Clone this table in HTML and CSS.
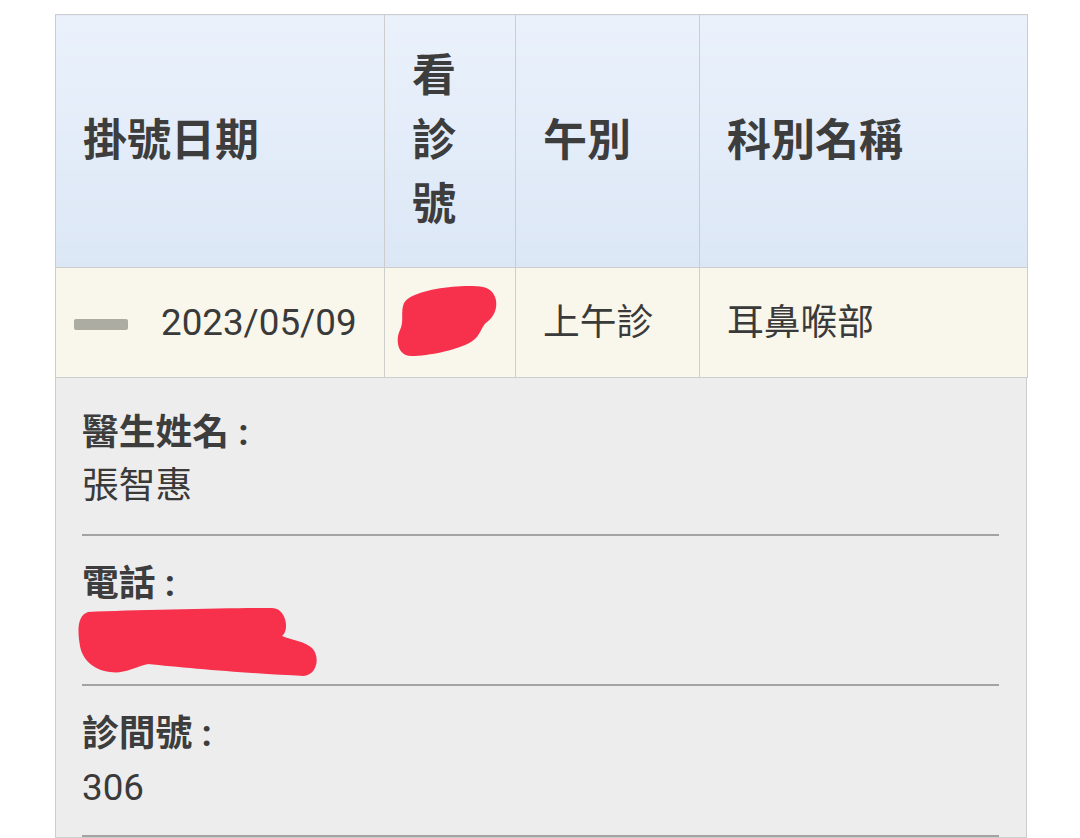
FILE: index.html
```html
<!DOCTYPE html>
<html>
  <head>
    <meta charset="utf-8">
    <title>掛號查詢</title>
    <link rel="stylesheet" href="styles.css">
  </head>
  <body>
    <div class="page">
      <table class="reg-table">
        <colgroup>
          <col class="col-date">
          <col class="col-no">
          <col class="col-period">
          <col class="col-dept">
        </colgroup>
        <thead>
          <tr>
            <th>掛號日期</th>
            <th>看診號</th>
            <th>午別</th>
            <th>科別名稱</th>
          </tr>
        </thead>
        <tbody>
          <tr class="row">
            <td class="date"><span class="mark"></span>2023/05/09</td>
            <td class="number">
              <svg class="scribble scribble-no" viewBox="0 0 106 76" width="106" height="76">
                <path d="M14 14 C30 4, 70 0, 88 3 C104 6, 106 28, 92 38 C86 42, 86 52, 76 58 C62 66, 34 72, 16 72 C3 72, 0 56, 5 46 C9 38, 6 30, 8 22 C9 18, 11 16, 14 14 Z" />
              </svg>
            </td>
            <td>上午診</td>
            <td>耳鼻喉部</td>
          </tr>
        </tbody>
      </table>

      <div class="details">
        <div class="item">
          <div class="label">醫生姓名 :</div>
          <div class="value">張智惠</div>
        </div>
        <div class="item">
          <div class="label">電話 :</div>
          <div class="value phone">
            <svg class="scribble scribble-phone" viewBox="0 0 246 76" width="246" height="76">
              <path d="M12 8 C60 6, 160 4, 196 4 C210 4, 214 26, 206 32 C216 36, 230 38, 236 44 C244 52, 242 70, 228 72 C180 70, 110 64, 72 60 C56 64, 48 70, 34 68 C16 66, 6 54, 4 42 C2 30, 0 12, 12 8 Z" />
            </svg>
          </div>
        </div>
        <div class="item">
          <div class="label">診間號 :</div>
          <div class="value">306</div>
        </div>
      </div>
    </div>
  </body>
</html>
```

FILE: styles.css
```css
:root {
  --border-color: #cdcdcd;
  --head-top: #eaf1fb;
  --head-bottom: #dce7f6;
  --row-color: #f9f6eb;
  --detail-color: #ededed;
  --text-color: #3a3a3a;
  --redact-color: #f7304b;
}

* {
  box-sizing: border-box;
}

html, body {
  margin: 0;
  padding: 0;
  background: #fff;
}

body {
  font-family: Roboto, "Noto Sans CJK TC", sans-serif;
  font-size: 36.75px;
  line-height: 1.45;
  color: var(--text-color);
}

.page {
  width: 972px;
  margin: 14px 0 0 55px;
}

/*----- TABLE -----*/

.reg-table {
  width: 100%;
  border-collapse: collapse;
  table-layout: fixed;
}

.col-date { width: 329px; }
.col-no { width: 131px; }
.col-period { width: 184px; }
.col-dept { width: 328px; }

.reg-table th,
.reg-table td {
  border: 1px solid var(--border-color);
  text-align: left;
  vertical-align: middle;
}

.reg-table th {
  background: linear-gradient(var(--head-top), var(--head-bottom));
  font-size: 44px;
  font-weight: bold;
  line-height: 64.5px;
  padding: 29px 27px;
  color: #3d3d3d;
}

.reg-table td {
  background: var(--row-color);
  padding: 28px 27px;
  white-space: nowrap;
}

.reg-table td.date {
  padding-left: 18px;
}

.mark {
  display: inline-block;
  width: 54px;
  height: 11px;
  margin-right: 33px;
  vertical-align: middle;
  background: #adaca3;
  border-radius: 2px;
}

.reg-table td.number {
  position: relative;
}

/*----- REDACTION SCRIBBLES -----*/

.scribble path {
  fill: var(--redact-color);
  stroke: none;
}

.scribble-no {
  position: absolute;
  left: 10px;
  top: 16px;
}

/*----- DETAILS -----*/

.details {
  background: var(--detail-color);
  border: 1px solid var(--border-color);
  border-top: none;
  padding: 7px 27px 0 26px;
}

.item {
  padding: 21px 0;
  border-bottom: 2px solid #a3a3a3;
}

.label {
  font-weight: bold;
  color: #3d3d3d;
}

.value {
  height: 53.5px;
}

.value.phone {
  position: relative;
}

.scribble-phone {
  position: absolute;
  left: -6px;
  top: -6px;
}
```
